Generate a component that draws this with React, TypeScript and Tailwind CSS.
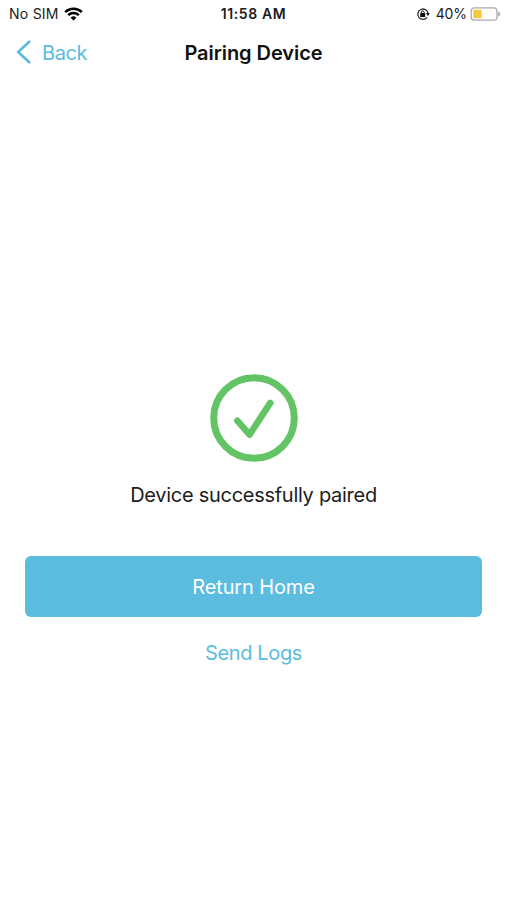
function StatusBar() {
  return (
    <div className="relative flex h-7 items-center justify-between pl-[9px] pr-[6px] text-[14px] leading-7 text-[#1c1c1c]">
      <div className="flex items-center gap-[5px]">
        <span className="tracking-[0.25px]">No SIM</span>
        <svg width="19" height="14" viewBox="0 0 19 14" fill="none" stroke="#000" strokeWidth="2.5">
          <path d="M1.2 5.1a12 12 0 0 1 16.6 0" />
          <path d="M4.2 8.2a7.7 7.7 0 0 1 10.6 0" />
          <path d="M6.6 10.7a4.2 4.2 0 0 1 5.8 0L9.5 13.6Z" fill="#000" stroke="none" />
        </svg>
      </div>
      <span className="absolute inset-x-0 text-center font-semibold tracking-[0.6px]">11:58 AM</span>
      <div className="flex items-center">
        <svg className="mr-[6px]" width="14" height="14" viewBox="0 0 14 14" fill="none">
          <path d="M11.1 10.4A5.2 5.2 0 1 1 12.1 6.4" stroke="#333" strokeWidth="1.3" />
          <path d="M9.9 6.1h4L12 9.2Z" fill="#222" />
          <rect x="4.2" y="6.1" width="5" height="3.9" rx="0.6" fill="#111" />
          <path d="M5.3 6.5V5.3a1.4 1.4 0 0 1 2.8 0v1.2" stroke="#111" strokeWidth="1" />
        </svg>
        <span className="mr-[3px] tracking-[-0.1px]">40%</span>
        <svg width="31" height="14" viewBox="0 0 31 14" fill="none">
          <rect x="1.2" y="0.8" width="25.8" height="12.4" rx="3.2" stroke="#aaa" strokeWidth="1.3" />
          <rect x="3.2" y="2.8" width="8.4" height="8.4" rx="1" fill="#f6c83f" />
          <path d="M28.2 4.4c2.6 1 2.6 4.2 0 5.2Z" fill="#aaa" />
        </svg>
      </div>
    </div>
  );
}

function NavBar() {
  return (
    <div className="relative flex h-[48px] items-center">
      <button className="relative z-10 ml-[16px] flex items-center gap-[10px] text-[20px] tracking-[-0.4px] text-[#5bbce0]">
        <svg width="16" height="24" viewBox="0 0 16 24" fill="none" stroke="#5bbce0" strokeWidth="2.7" strokeLinecap="round" strokeLinejoin="round">
          <path d="M13.2 1.8 2.2 12l11 10.2" />
        </svg>
        <span className="pt-px">Back</span>
      </button>
      <h1 className="absolute inset-x-0 pt-px text-center text-[20px] font-semibold tracking-[-0.05px] text-[#111]">
        Pairing Device
      </h1>
    </div>
  );
}

export default function App() {
  return (
    <div className="flex h-[900px] w-[507px] flex-col bg-white font-['Inter','Liberation_Sans',sans-serif]">
      <StatusBar />
      <NavBar />

      <main className="flex flex-col items-center px-[25px] pt-[298px]">
        <svg width="88" height="88" viewBox="0 0 88 88" fill="none" stroke="#62c465" strokeWidth="7" strokeLinecap="round" strokeLinejoin="round">
          <circle cx="44" cy="44" r="40.3" />
          <path d="M27.3 46.7 39.5 60.7 60.3 28.9" strokeWidth="6.6" />
        </svg>
        <p className="mt-[17px] text-[20px] leading-8 tracking-[-0.28px] text-[#1c1c1c]">
          Device successfully paired
        </p>
        <button className="mt-[44.5px] h-[61px] w-full rounded-md bg-[#5bbce0] pt-px text-[20px] tracking-[-0.15px] text-white">
          Return Home
        </button>
        <button className="mt-[20.5px] text-[20px] leading-8 tracking-[-0.35px] text-[#5bbce0]">Send Logs</button>
      </main>
    </div>
  );
}
